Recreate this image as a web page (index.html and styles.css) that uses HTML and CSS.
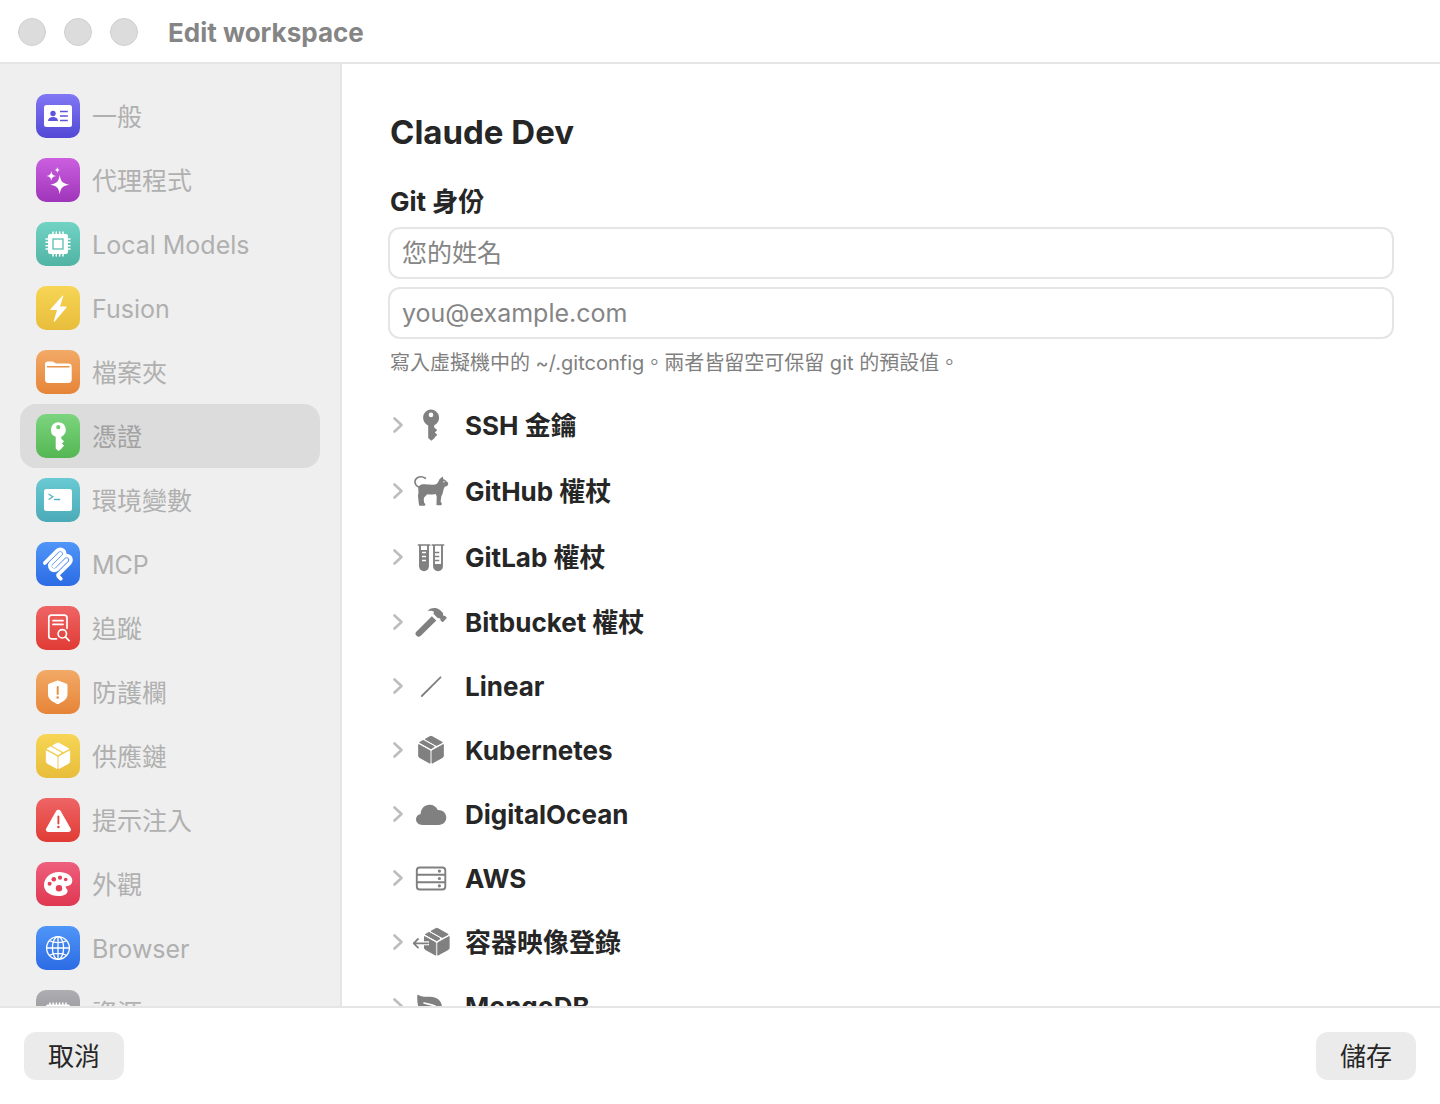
FILE: index.html
```html
<!DOCTYPE html>
<html lang="zh-Hant">
<head>
  <meta charset="UTF-8" />
  <meta name="viewport" content="width=device-width, initial-scale=1.0" />
  <title>Edit workspace</title>
  <link rel="stylesheet" href="styles.css">
</head>
<body>
  <!-- shared icons -->
  <svg class="sprite" aria-hidden="true">
    <symbol id="chevron" viewBox="0 0 12 18">
      <path d="M2.5 2.5 9.5 9l-7 6.5" fill="none" stroke="currentColor" stroke-width="2.6" stroke-linecap="round" stroke-linejoin="round"/>
    </symbol>
    <symbol id="key" viewBox="0 0 40 40">
      <path fill="currentColor" fill-rule="evenodd" d="M20 4.600a8.200 8.200 0 0 1 3.200 15.700v2.200l3 2.600-2.300 2.400 2.400 2.500-2.600 2.300v.8L20.300 35.700 17.200 32.900V20.400A8.200 8.200 0 0 1 20 4.600zM20 7.600a2.300 2.300 0 1 0 0 4.600 2.300 2.300 0 0 0 0-4.600z"/>
    </symbol>
    <symbol id="box" viewBox="0 0 40 40">
      <g fill="currentColor" stroke="currentColor" stroke-width="1" stroke-linejoin="round">
        <path d="M7.700 14.600 19 20.800v12.400L8.600 27.500a1.800 1.800 0 0 1-.9-1.500z"/>
        <path d="M32.300 14.600 21 20.800v12.400l10.400-5.700a1.800 1.800 0 0 0 .9-1.500z"/>
        <path d="M8.600 12.400 12.300 10.400 23.300 16.600 20 18.700z"/>
        <path d="M14.300 9.200 19 6.600a2 2 0 0 1 2 0L31.400 12.400 25.500 15.500z"/>
      </g>
    </symbol>
  </svg>

  <header class="titlebar">
    <span class="light"></span>
    <span class="light"></span>
    <span class="light"></span>
    <h1>Edit workspace</h1>
  </header>

  <div class="body">
    <nav class="sidebar">
      <a href="#" class="item">
        <svg class="tile indigo" viewBox="0 0 44 44">
          <rect x="8" y="11" width="28" height="22" rx="2.500" fill="#fff"/>
          <circle cx="17" cy="19.500" r="2.700" fill="#5e53dd"/>
          <path d="M12 27c0-2.700 2.200-4 5-4s5 1.300 5 4z" fill="#5e53dd"/>
          <path d="M24 17.500h7.800M24 22h7.800M24 26.500h7.800" stroke="#5e53dd" stroke-width="1.300"/>
        </svg>
        <span>一般</span>
      </a>
      <a href="#" class="item">
        <svg class="tile purple" viewBox="0 0 44 44">
          <g fill="#fff">
            <path d="M23.700 17c1.200 6.700 2.800 8.500 9.500 9.700-6.700 1.200-8.300 2.800-9.500 9.500-1.200-6.700-2.800-8.300-9.500-9.500 6.700-1.200 8.300-3 9.500-9.700z"/>
            <path d="M15.300 13c.6 3.500 1.400 4.300 4.900 5-3.500.7-4.300 1.500-4.900 5-.6-3.500-1.400-4.300-4.900-5 3.500-.7 4.300-1.500 4.900-5z"/>
            <path d="M21.300 9c.4 2.200.9 2.700 3 3.100-2.100.4-2.600.9-3 3-.4-2.100-.9-2.600-3-3 2.100-.4 2.600-.9 3-3.100z"/>
          </g>
        </svg>
        <span>代理程式</span>
      </a>
      <a href="#" class="item">
        <svg class="tile mint" viewBox="0 0 44 44">
          <rect x="12" y="12" width="20" height="20" rx="2" fill="#fff"/>
          <path d="M17 10v24M20.300 10v24M23.700 10v24M27 10v24M10 17h24M10 20.300h24M10 23.700h24M10 27h24" stroke="#fff" stroke-width="1.500" stroke-linecap="round"/>
          <rect x="17" y="17" width="10" height="10" fill="#fff" stroke="#59bfae" stroke-width="1.300"/>
        </svg>
        <span>Local Models</span>
      </a>
      <a href="#" class="item">
        <svg class="tile yellow" viewBox="0 0 44 44">
          <path d="M26.400 9.700 14.400 23.200c-.3.400-.1.800.4.800H21l-3.200 11c-.2.800.4 1.100.9.500L30.500 21.500c.3-.4.100-.9-.4-.9H24l3.200-10.400c.2-.7-.3-1.100-.8-.5z" fill="#fff"/>
        </svg>
        <span>Fusion</span>
      </a>
      <a href="#" class="item">
        <svg class="tile orange" viewBox="0 0 44 44">
          <path d="M9 14.500c0-2 1-3 3-3h4c2 0 2.500 1.900 4.300 1.900h12.200c2.100 0 3.200 1 3.200 3v13.300c0 2-1.100 3.200-3.200 3.200H12c-2 0-3-1.200-3-3.200z" fill="#fff"/>
          <path d="M11 16.700h22.500" stroke="#eb9348" stroke-width="1.500"/>
        </svg>
        <span>檔案夾</span>
      </a>
      <a href="#" class="item selected">
        <svg class="tile green" viewBox="0 0 44 44">
          <use href="#key" x="3.800" y="4" width="37" height="37" color="#fff"/>
        </svg>
        <span>憑證</span>
      </a>
      <a href="#" class="item">
        <svg class="tile teal" viewBox="0 0 44 44">
          <rect x="8" y="11" width="28" height="22" rx="2.500" fill="#fff"/>
          <path d="m13 16.200 3.800 2.500-3.800 2.500M18.500 21.500h5.200" fill="none" stroke="#55b4c1" stroke-width="1.300" stroke-linecap="round"/>
        </svg>
        <span>環境變數</span>
      </a>
      <a href="#" class="item">
        <svg class="tile blue" viewBox="0 0 44 44">
          <g transform="translate(5.500 5.500) scale(.183)" fill="none" stroke="#fff" stroke-width="20" stroke-linecap="round">
            <path d="M18 84.850 85.880 16.970c9.370-9.370 24.570-9.370 33.940 0s9.370 24.570 0 33.940L68.560 102.180"/>
            <path d="M69.270 101.470 119.820 50.910c9.380-9.370 24.570-9.370 33.950 0l.35.360c9.370 9.370 9.370 24.560 0 33.940L92.720 146.600c-3.120 3.120-3.120 8.190 0 11.310l12.610 12.610"/>
            <path d="M102.850 33.940 52.650 84.150c-9.370 9.370-9.370 24.560 0 33.940s24.570 9.370 33.940 0l50.200-50.210"/>
          </g>
        </svg>
        <span>MCP</span>
      </a>
      <a href="#" class="item">
        <svg class="tile red" viewBox="0 0 44 44">
          <g fill="none" stroke="#fff" stroke-width="1.700" stroke-linecap="round">
            <path d="M20.500 32.800h-5c-1.800 0-2.700-.9-2.700-2.700V11.800c0-1.800.9-2.700 2.700-2.700H28.300c1.800 0 2.700.9 2.700 2.700v10.500"/>
            <path d="M17 14.700h10M17 18.400h10"/>
            <circle cx="26.300" cy="27.800" r="4.200"/>
            <path d="m29.600 31.200 3.500 3.500"/>
          </g>
        </svg>
        <span>追蹤</span>
      </a>
      <a href="#" class="item">
        <svg class="tile orange" viewBox="0 0 44 44">
          <path d="M20.700 10.700c.7-.4 1.300-.4 2 0l7.300 2.700c1 .3 1.500 1 1.500 2V24c0 4.500-2.500 6.500-8.500 9.700-.9.500-1.600.5-2.500 0-6-3.200-8.500-5.200-8.500-9.700v-8.600c0-1 .5-1.700 1.500-2z" fill="#fff"/>
          <path d="M21.700 17v7" stroke="#ea9042" stroke-width="2" stroke-linecap="round"/>
          <circle cx="21.700" cy="27.500" r="1.300" fill="#ea9042"/>
        </svg>
        <span>防護欄</span>
      </a>
      <a href="#" class="item">
        <svg class="tile yellow" viewBox="0 0 44 44">
          <use href="#box" x="3" y="3" width="38" height="38" color="#fff"/>
        </svg>
        <span>供應鏈</span>
      </a>
      <a href="#" class="item">
        <svg class="tile red" viewBox="0 0 44 44">
          <path d="M20.100 12.900c1-1.700 3.600-1.700 4.600 0l9.900 17.600c1 1.800-.1 3.500-2.200 3.500h-20c-2.100 0-3.200-1.700-2.200-3.500z" fill="#fff"/>
          <path d="M22.400 18.500v7" stroke="#e4463f" stroke-width="1.900" stroke-linecap="round"/>
          <circle cx="22.400" cy="29" r="1.300" fill="#e4463f"/>
        </svg>
        <span>提示注入</span>
      </a>
      <a href="#" class="item">
        <svg class="tile pink" viewBox="0 0 44 44">
          <path d="M23 10c8 0 13.300 3.800 13.300 8.600 0 3.500-2.300 5.400-4.800 5.400-1.700 0-2.200.8-1.500 2 .6.900 1.600 1.500 1.600 3 0 3-3.800 5-9.100 5C14 34 8 29.500 8 23.200 8 15.500 14.500 10 23 10z" fill="#fff"/>
          <g fill="#e4415a">
            <circle cx="13.600" cy="21.800" r="2"/>
            <circle cx="17.800" cy="17.300" r="2.300"/>
            <circle cx="24" cy="15.700" r="2.100"/>
            <circle cx="29.700" cy="17.500" r="1.800"/>
            <circle cx="23" cy="26.200" r="3.200"/>
          </g>
        </svg>
        <span>外觀</span>
      </a>
      <a href="#" class="item">
        <svg class="tile blue" viewBox="0 0 44 44">
          <g fill="none" stroke="#fff" stroke-width="1.300">
            <circle cx="22" cy="22" r="11.400"/>
            <ellipse cx="22" cy="22" rx="5.600" ry="11.400"/>
            <path d="M22 10.600v22.800M10.600 22h22.800M13.500 14.700c4.500 2.500 12.500 2.500 17 0M13.500 29.300c4.500-2.500 12.500-2.500 17 0"/>
          </g>
        </svg>
        <span>Browser</span>
      </a>
      <a href="#" class="item">
        <svg class="tile gray" viewBox="0 0 44 44">
          <rect x="10" y="14.500" width="24" height="15" rx="1.500" fill="#fff"/>
          <path d="M14 13v18M17.200 13v18M20.400 13v18M23.600 13v18M26.800 13v18M30 13v18" stroke="#fff" stroke-width="1.500" stroke-linecap="round"/>
        </svg>
        <span>資源</span>
      </a>
    </nav>

    <main class="content">
      <h2>Claude Dev</h2>
      <h3>Git 身份</h3>
      <div class="fields">
        <input type="text" placeholder="您的姓名" aria-label="您的姓名">
        <input type="email" placeholder="you@example.com" aria-label="you@example.com">
      </div>
      <p class="hint">寫入虛擬機中的 ~/.gitconfig。兩者皆留空可保留 git 的預設值。</p>

      <div class="sections">
        <details>
          <summary class="tall">
            <svg class="chevron"><use href="#chevron"/></svg>
            <svg class="icon"><use href="#key"/></svg>
            <span>SSH 金鑰</span>
          </summary>
        </details>
        <details>
          <summary class="tall">
            <svg class="chevron"><use href="#chevron"/></svg>
            <svg class="icon" viewBox="0 0 40 40">
              <path d="M14.300 7.200C12 5.600 8.500 5.500 6 7c-2.500 1.600-2.600 4.800-1 7 1 1.300 2.500 2.200 4.500 2.600" fill="none" stroke="currentColor" stroke-width="1.700" stroke-linecap="round"/>
              <path fill="currentColor" fill-rule="evenodd" d="M8.500 14.500c1.200-.8 2.500-1.200 4.500-1.200 3 0 7 .8 11 .2 1.500-.2 2.300-.9 3-2.200l1.500-3L31 6c.5-.6 1-.3 1 .4l.4 1.800c1.300.3 2.200 1 3 2l1.500 1.200c.5.600.4 1.600-.1 2.500-.6 1.100-1.700 1.400-2.900 1.500-.9 1.800-1.400 2.800-1.700 4.600-.4 2.200-.8 3.600-1.800 5l-.8 5.500 1 1.500c.5.800.2 2.200-.8 2.200h-3.600c-.8 0-.9-.7-.7-1.400l.2-7.300-1-2.500c-3 .6-6 .8-8.500.2-1.200 1.500-2.500 2.300-3.300 4-.4 1.300.2 2.500.2 4.500.9.700 1.300 1.200 1.200 2 0 .8-.5 1-1.200 1H9.500c-1 0-1.500-.4-1.600-1.500L7 25.500c-.1-2 .5-3 .5-4.500-.4-2.500-.5-4.800 1-6.500zM33 10a.7.700 0 1 0 0 1.400.7.700 0 0 0 0-1.400z"/>
            </svg>
            <span>GitHub 權杖</span>
          </summary>
        </details>
        <details>
          <summary class="tall">
            <svg class="chevron"><use href="#chevron"/></svg>
            <svg class="icon" viewBox="0 0 40 40">
              <path d="M7.500 8h11.300M21.300 8h11.300" stroke="currentColor" stroke-width="1.700" stroke-linecap="round"/>
              <path d="M9 8v21.300a4 4 0 0 0 8 0V8M23 8v21.300a4 4 0 0 0 8 0V8" fill="none" stroke="currentColor" stroke-width="1.900"/>
              <path d="M9 13h8v16.300a4 4 0 0 1-8 0zM23 27h8v2.300a4 4 0 0 1-8 0z" fill="currentColor"/>
              <path d="M11 15.500H15M11 19.500H15M11 23.500H15" stroke="#fff" stroke-width="1.400"/>
              <path d="M24 15.500h4.300M24 19.500h4.300M24 23.500h4.300" stroke="currentColor" stroke-width="1.300"/>
            </svg>
            <span>GitLab 權杖</span>
          </summary>
        </details>
        <details>
          <summary>
            <svg class="chevron"><use href="#chevron"/></svg>
            <svg class="icon" viewBox="0 0 40 40">
              <g fill="currentColor">
                <path d="m20.800 14.300 4.500 4.300L9.800 33.800c-1.300 1.200-2.900 1.200-4 .1l-.6-.6c-1.100-1.200-1-2.800.3-3.900z"/>
                <path d="M17.300 8.300C20 5.500 25.500 5 29 8l2.300 2.300c.8.800 1 1.700.8 2.700l.8.900 1-.2 1.500 1.500c.4.400.4.900 0 1.300l-3.200 3.200c-.4.400-.9.400-1.300 0l-1.500-1.500.1-1.100-.9-.9c-1 .2-1.700 0-2.500-.7l-3-3c-.8-.8-.7-1.700-.1-2.500-1.700-1.200-3.300-1.300-5.300-1-.6 0-.8-.3-.4-.7z"/>
              </g>
            </svg>
            <span>Bitbucket 權杖</span>
          </summary>
        </details>
        <details>
          <summary>
            <svg class="chevron"><use href="#chevron"/></svg>
            <svg class="icon" viewBox="0 0 40 40">
              <path d="M10.800 30 29.500 11.300" stroke="currentColor" stroke-width="1.800" stroke-linecap="round"/>
            </svg>
            <span>Linear</span>
          </summary>
        </details>
        <details>
          <summary>
            <svg class="chevron"><use href="#chevron"/></svg>
            <svg class="icon"><use href="#box"/></svg>
            <span>Kubernetes</span>
          </summary>
        </details>
        <details>
          <summary>
            <svg class="chevron"><use href="#chevron"/></svg>
            <svg class="icon" viewBox="0 0 40 40">
              <path d="M11.500 31C7.600 31 5 28.600 5 25.300c0-2.800 1.800-4.900 4.600-5.400C9.800 14.600 13.500 10.800 18.600 10.800c3.800 0 6.700 2 8.200 5.300 4.900-.2 8.500 3 8.500 7.500 0 4.300-3.200 7.400-7.600 7.400z" fill="currentColor"/>
            </svg>
            <span>DigitalOcean</span>
          </summary>
        </details>
        <details>
          <summary>
            <svg class="chevron"><use href="#chevron"/></svg>
            <svg class="icon" viewBox="0 0 40 40">
              <g fill="none" stroke="currentColor" stroke-width="1.900">
                <rect x="5.800" y="9.500" width="28.500" height="22" rx="3"/>
                <path d="M6 16.800h28M6 24.200h28"/>
              </g>
              <g fill="currentColor">
                <circle cx="28.400" cy="13.100" r="1.600"/>
                <circle cx="28.400" cy="20.500" r="1.600"/>
                <circle cx="28.400" cy="27.800" r="1.600"/>
              </g>
            </svg>
            <span>AWS</span>
          </summary>
        </details>
        <details>
          <summary>
            <svg class="chevron"><use href="#chevron"/></svg>
            <svg class="icon" viewBox="0 0 40 40">
              <use href="#box" x="5.800" y="0" width="40" height="40"/>
              <path d="M12 21.300h6" stroke="#fff" stroke-width="4"/>
              <path d="M17 21.300H3M7 17l-4.300 4.300L7 25.600" fill="none" stroke="currentColor" stroke-width="1.800" stroke-linecap="round" stroke-linejoin="round"/>
            </svg>
            <span>容器映像登錄</span>
          </summary>
        </details>
        <details>
          <summary>
            <svg class="chevron"><use href="#chevron"/></svg>
            <svg class="icon" viewBox="0 0 40 40">
              <path d="M6.300 9.500c0-.8.600-1 1.200-.6 3 2 6.500 1.800 11.500 1.800 7.500 0 12 4.500 12 10.800l3 6.500c.5 1.300-1.500 2-2.200.8l-2-3C27.500 29 24 30.500 20 30.500c-9 0-14.500-7-13.700-21z" fill="currentColor"/>
              <path d="M13 17c6.500 2 12 1.500 16 8" fill="none" stroke="#fff" stroke-width="1.600" stroke-linecap="round"/>
            </svg>
            <span>MongoDB</span>
          </summary>
        </details>
      </div>
    </main>
  </div>

  <footer class="actions">
    <button type="button">取消</button>
    <button type="button">儲存</button>
  </footer>
</body>
</html>
```
FILE: styles.css
```css
* { box-sizing: border-box; }
body {
  margin: 0;
  height: 100vh;
  display: flex;
  flex-direction: column;
  overflow: hidden;
  background: #fff;
  color: #262626;
  font-family: Inter, "Noto Sans CJK TC", sans-serif;
  font-size: 26px;
  line-height: 32px;
}
.sprite { position: absolute; width: 0; height: 0; }

.titlebar {
  display: flex;
  align-items: center;
  gap: 18px;
  height: 64px;
  padding: 2px 18px 0;
  border-bottom: 2px solid #e5e5e5;
}
.light {
  width: 28px;
  height: 28px;
  border-radius: 50%;
  background: #dcdcdc;
  border: 1px solid #cfcfcf;
}
.titlebar h1 {
  margin: 2px 0 0 12px;
  font-size: 26px;
  font-weight: 700;
  color: #858585;
}

.body {
  flex: 1;
  min-height: 0;
  display: flex;
}
.sidebar {
  flex: none;
  width: 342px;
  padding: 20px;
  overflow-y: auto;
  scrollbar-width: none;
  background: #efefef;
  border-right: 2px solid #e5e5e5;
  font-size: 25px;
}
.item {
  display: flex;
  align-items: center;
  gap: 12px;
  height: 64px;
  padding: 0 16px;
  border-radius: 16px;
  color: #b0b0b0;
  text-decoration: none;
}
.item span, summary span { padding-top: 2px; }
.item.selected { background: #dcdcdc; color: #a2a2a2; }
.tile {
  flex: none;
  width: 44px;
  height: 44px;
  border-radius: 10px;
}
.indigo { background: linear-gradient(#8078f4, #5248d6); }
.purple { background: linear-gradient(#cb5fe0, #9f35b9); }
.mint { background: linear-gradient(#70d3c4, #50b3a3); }
.yellow { background: linear-gradient(#f7d555, #e8bd3b); }
.orange { background: linear-gradient(#f2aa66, #e68438); }
.green { background: linear-gradient(#7cd47f, #54b752); }
.teal { background: linear-gradient(#69cad3, #4baab7); }
.blue { background: linear-gradient(#5096f8, #2b6be4); }
.red { background: linear-gradient(#ee6565, #e03b34); }
.pink { background: linear-gradient(#ee5f7e, #df3750); }
.gray { background: linear-gradient(#aeaeb2, #8c8c90); }

.content {
  flex: 1;
  min-width: 0;
  padding: 48px 46px 0;
  overflow-y: auto;
  scrollbar-width: none;
}
h2, h3, .hint { margin: 0; padding: 0 2px; }
h2 {
  font-size: 33px;
  font-weight: 700;
  line-height: 40px;
}
h3 {
  margin: 34px 0 9px;
  font-size: 26px;
  font-weight: 700;
}
.fields {
  display: flex;
  flex-direction: column;
  gap: 8px;
}
.fields input {
  width: 100%;
  height: 52px;
  padding: 0 12px;
  border: 2px solid #e5e5e5;
  border-radius: 12px;
  background: #fff;
  color: #262626;
  font: inherit;
  font-size: 25px;
}
.fields input::placeholder { color: #858585; opacity: 1; }
.hint {
  margin-top: 10px;
  font-size: 20px;
  line-height: 28px;
  color: #808080;
}

.sections { margin-top: 15px; padding-left: 4px; }
summary {
  display: flex;
  align-items: center;
  height: 64px;
  list-style: none;
  font-weight: 700;
  cursor: pointer;
}
summary.tall { height: 66px; }
.chevron {
  width: 12px;
  height: 18px;
  margin-right: 7px;
  color: #bdbdbd;
}
.icon {
  width: 40px;
  height: 40px;
  margin-right: 14px;
  color: #808080;
}

.actions {
  display: flex;
  justify-content: space-between;
  align-items: center;
  height: 98px;
  padding: 0 24px;
  border-top: 2px solid #e5e5e5;
}
.actions button {
  height: 48px;
  padding: 2px 24px 0;
  border: none;
  border-radius: 12px;
  background: #ebebeb;
  color: #262626;
  font: inherit;
}
```
